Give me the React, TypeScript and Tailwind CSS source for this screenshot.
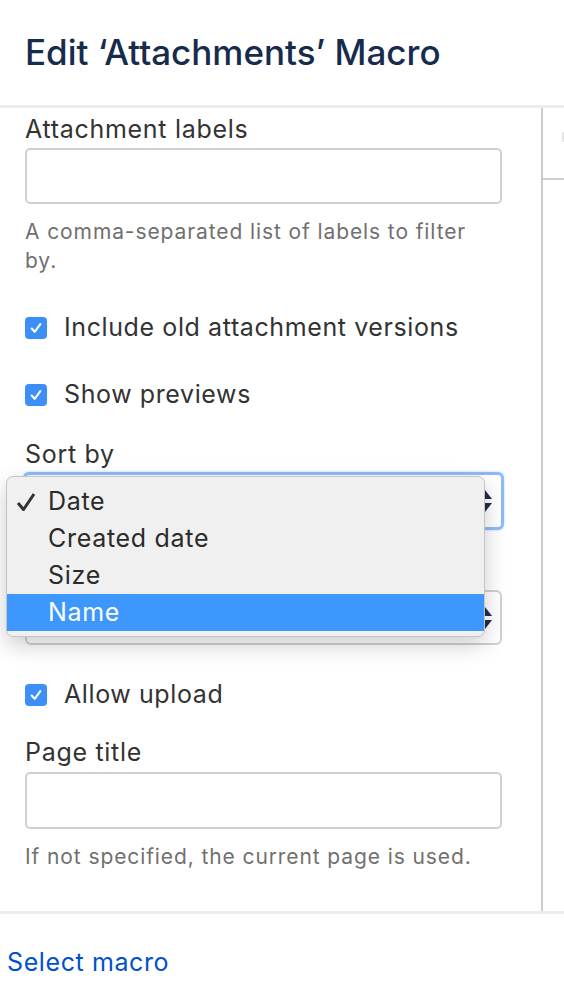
import React from 'react';

const font = { fontFamily: 'Inter, "Liberation Sans", Arial, sans-serif' };

const CheckBox = () => (
	<span className="flex h-[22px] w-[22px] shrink-0 items-center justify-center rounded-[4px] bg-[#3b8ff6]">
		<svg width="14" height="14" viewBox="0 0 13 13" fill="none">
			<path d="M2.5 7 L5.3 10 L10.5 3" stroke="white" strokeWidth="2" strokeLinecap="round" strokeLinejoin="round" />
		</svg>
	</span>
);

const Arrows = () => (
	<svg width="16" height="26" viewBox="0 0 16 26" className="shrink-0">
		<path d="M8 2 L15 11 L1 11 Z" fill="#1f2d4d" />
		<path d="M1 15 L15 15 L8 24 Z" fill="#1f2d4d" />
	</svg>
);

const CheckRow = ({ label }: { label: string }) => (
	<label className="flex h-[30px] items-center gap-[17px] text-[25px] tracking-[0.6px] text-[#333333]">
		<CheckBox />
		<span>{label}</span>
	</label>
);

const Label = ({ children, className = '' }: { children?: React.ReactNode; className?: string }) => (
	<div className={`h-[30px] text-[25px] leading-[30px] tracking-[0.7px] text-[#333333] ${className}`}>{children}</div>
);

const App = () => {
	const options = ['Date', 'Created date', 'Size', 'Name'];

	return (
		<div className="relative h-[999px] w-[564px] overflow-hidden bg-white" style={font}>
			{/* Header */}
			<div className="flex h-[105px] items-center px-[25px]">
				<h1 className="text-[35px] font-medium text-[#172b4d]">Edit ‘Attachments’ Macro</h1>
			</div>
			<div className="h-[3px] bg-[#ebecf0]" />

			<div className="flex h-[803px]">
				{/* Form column */}
				<div className="w-[543px] border-r-2 border-[#cccccc] px-[25px] pt-[6px]">
					<Label>Attachment labels</Label>
					<div className="mt-[4px] h-[56px] w-[477px] rounded-[5px] border-2 border-[#d0d0d0]" />
					<p className="mt-[13px] max-w-[460px] text-[21px] leading-[29px] tracking-[0.9px] text-[#707070]">
						A comma-separated list of labels to filter by.
					</p>

					<div className="mt-[38px]">
						<CheckRow label="Include old attachment versions" />
					</div>
					<div className="mt-[37px]">
						<CheckRow label="Show previews" />
					</div>

					<Label className="mt-[29px]">Sort by</Label>
					<div className="relative mt-[3px]">
						<div className="-ml-[2px] flex h-[58px] w-[481px] items-center justify-end rounded-[6px] border-[3px] border-[#8cbcf8] bg-white pr-[8px] shadow-[0_0_3px_#b9d6fb]">
							<Arrows />
						</div>

						{/* Open dropdown */}
						<div className="absolute left-[-19px] top-[4px] z-10 h-[161px] w-[479px] rounded-[7px] border border-[#c4c4c4] bg-[#f0f0f0] pt-[6px] shadow-[0_8px_22px_rgba(0,0,0,0.2)]">
							{options.map((opt, i) => (
								<div
									key={opt}
									className={`relative flex h-[37px] items-center pl-[41px] text-[25px] tracking-[0.7px] ${
										i === 3 ? 'bg-[#3d97fc] text-white' : 'text-[#2b2b2b]'
									}`}
								>
									{i === 0 && (
										<svg width="20" height="20" viewBox="0 0 20 20" className="absolute left-[9px] top-[9px]">
											<path d="M2 11 L7.5 17.5 L18 2" stroke="#333333" strokeWidth="3" fill="none" strokeLinejoin="round" />
										</svg>
									)}
									{opt}
								</div>
							))}
						</div>

						{/* label of the second select sits under the open menu */}
						<Label className="mt-[26px]" />
						<div className="mt-[4px] flex h-[55px] w-[477px] items-center justify-end rounded-[6px] border-2 border-[#d0d0d0] bg-white pr-[7px]">
							<Arrows />
						</div>
					</div>

					<div className="mt-[35px]">
						<CheckRow label="Allow upload" />
					</div>

					<Label className="mt-[27px]">Page title</Label>
					<div className="mt-[5px] h-[57px] w-[477px] rounded-[5px] border-2 border-[#d0d0d0]" />
					<p className="mt-[13px] text-[21px] leading-[29px] tracking-[0.9px] text-[#707070]">
						If not specified, the current page is used.
					</p>
				</div>

				{/* Side column */}
				<div className="flex-1">
					<div className="flex h-[70px] items-start justify-end pt-[24px]">
						<div className="h-[10px] w-[2px] bg-[#e4e4e4]" />
					</div>
					<div className="h-[2px] bg-[#d0d0d0]" />
				</div>
			</div>

			<div className="h-[3px] bg-[#ebecf0]" />
			<div className="flex h-[98px] items-center px-[7px]">
				<a className="text-[25px] tracking-[0.6px] text-[#0052cc]">Select macro</a>
			</div>
		</div>
	);
};

export default App;
